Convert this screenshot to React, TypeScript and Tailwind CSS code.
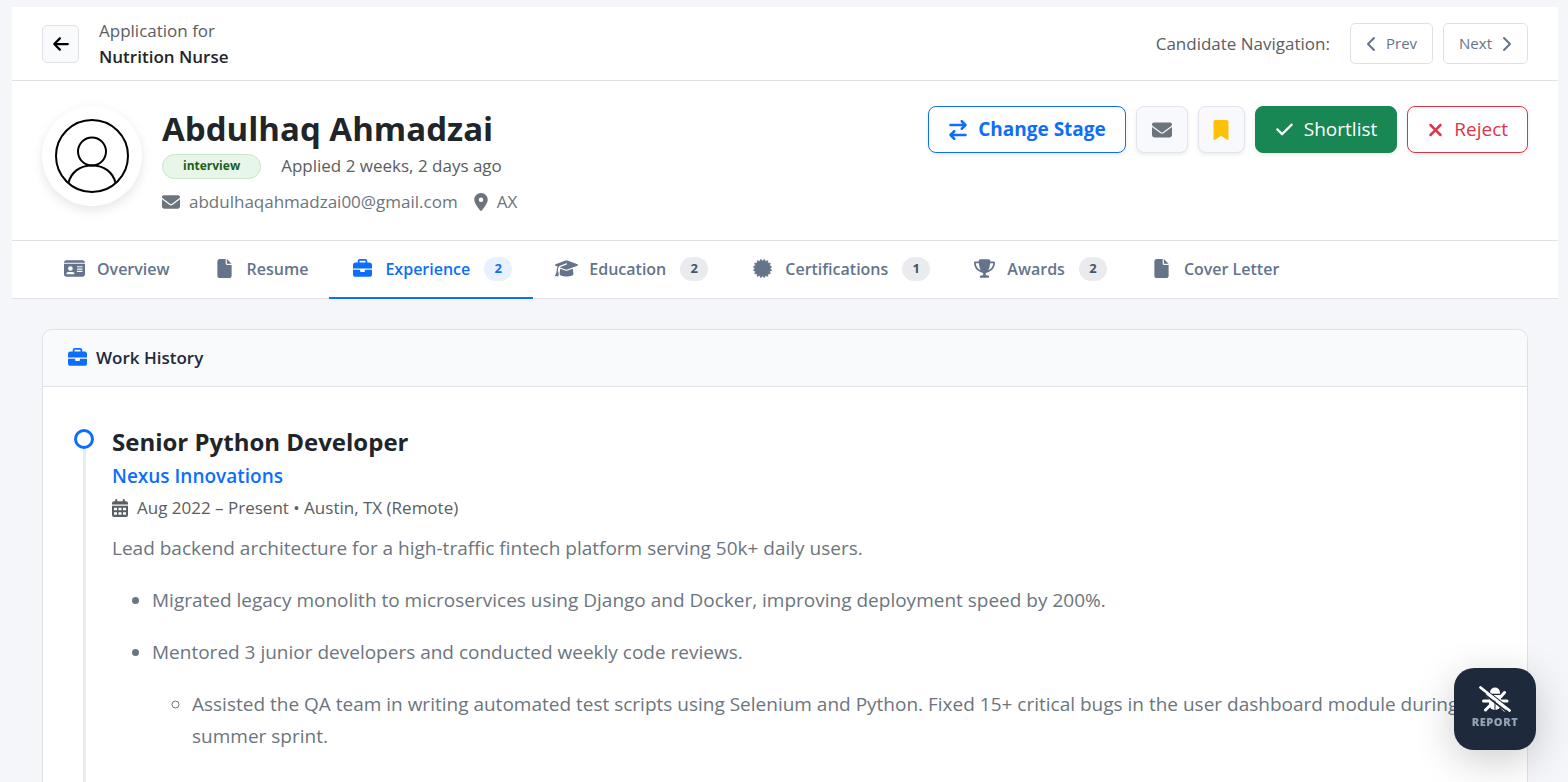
import type { ComponentType, ReactNode } from "react";
import {
  FaArrowLeft,
  FaArrowRightArrowLeft,
  FaBookmark,
  FaBriefcase,
  FaCheck,
  FaChevronLeft,
  FaChevronRight,
  FaEnvelope,
  FaFile,
  FaGraduationCap,
  FaIdCard,
  FaLocationDot,
  FaTrophy,
  FaXmark,
} from "react-icons/fa6";

type IconProps = { className?: string };

const sealPoints = Array.from({ length: 32 }, (_, i) => {
  const radius = i % 2 === 0 ? 10 : 8;
  const angle = (Math.PI * (i + 1)) / 16;
  return `${(10 + radius * Math.cos(angle)).toFixed(2)},${(10 + radius * Math.sin(angle)).toFixed(2)}`;
}).join(" ");

function SealIcon({ className }: IconProps) {
  return (
    <svg viewBox="0 0 20 20" fill="currentColor" className={className} aria-hidden="true">
      <polygon points={sealPoints} stroke="currentColor" strokeWidth="0.6" strokeLinejoin="round" />
    </svg>
  );
}

function CalendarIcon({ className }: IconProps) {
  return (
    <svg viewBox="0 0 16 18" fill="currentColor" className={className} aria-hidden="true">
      <path
        fillRule="evenodd"
        d="M3.200 1a1 1 0 0 1 2 0v1.200h5.600V1a1 1 0 0 1 2 0v1.200H14a2 2 0 0 1 2 2V5.500H0V4.200a2 2 0 0 1 2-2h1.200ZM0 6.800h16V16a2 2 0 0 1-2 2H2a2 2 0 0 1-2-2ZM2 8.700v2.600h3V8.700Zm4.500 0v2.600h3V8.700Zm4.500 0v2.600h3V8.700ZM2 13.200v2.600h3v-2.600Zm4.500 0v2.600h3v-2.600Zm4.500 0v2.600h3v-2.600Z"
      />
    </svg>
  );
}

function BugSlashIcon({ className }: IconProps) {
  return (
    <svg viewBox="0 0 32 26" fill="none" className={className} aria-hidden="true">
      <path d="M11 6.500a5 5 0 0 1 10 0v1.200H11Z" fill="#fff" />
      <path d="M10 9h12v9a6 6 0 0 1-12 0Z" fill="#fff" />
      <path
        d="M22 10.500 25.500 6.500M22 15h6M21 19.500l4.500 4.500M10 15H4.500M11 19.500 6.500 24M10 11 8 9.500"
        stroke="#fff"
        strokeWidth="3"
        strokeLinecap="round"
      />
      <path d="M16 14v10" stroke="#1e293b" strokeWidth="1" />
      <path d="M3 1.200 32 23.500M0.500 4.500 28 26" stroke="#1e293b" strokeWidth="1.600" />
      <path d="M1.500 1.500 30.500 24.500" stroke="#fff" strokeWidth="2.800" strokeLinecap="round" />
    </svg>
  );
}

type Tab = { label: string; icon: ComponentType<IconProps>; size: string; count?: number; active?: boolean };

const tabs: Tab[] = [
  { label: "Overview", icon: FaIdCard, size: "h-[19px] w-[21px]" },
  { label: "Resume", icon: FaFile, size: "h-[19px] w-[15px]" },
  { label: "Experience", icon: FaBriefcase, size: "size-[19px]", count: 2, active: true },
  { label: "Education", icon: FaGraduationCap, size: "h-[19px] w-[23px]", count: 2 },
  { label: "Certifications", icon: SealIcon, size: "size-[19px]", count: 1 },
  { label: "Awards", icon: FaTrophy, size: "h-[19px] w-[21px]", count: 2 },
  { label: "Cover Letter", icon: FaFile, size: "h-[19px] w-[15px]" },
];

function TopBar() {
  const nav =
    "flex h-[41px] items-center gap-2 rounded-[5px] border border-[#dee2e6] px-[15px] text-[15px] text-[#64748b]";
  return (
    <div className="flex items-center justify-between border-b border-[#dee2e6] px-[30px] py-[10px]">
      <div className="flex items-center gap-5">
        <button
          type="button"
          aria-label="Back"
          className="flex h-[38px] w-[37px] items-center justify-center rounded-[5px] border border-[#dee2e6] bg-[#f8fafc] text-black"
        >
          <FaArrowLeft className="size-[18px]" />
        </button>
        <div className="pt-px text-[17px] leading-[26px]">
          <p className="text-[#5a5d61]">Application for</p>
          <h2 className="font-semibold text-[#212529]">Nutrition Nurse</h2>
        </div>
      </div>
      <nav className="flex items-center gap-[10px]" aria-label="Candidate navigation">
        <span className="pr-[10px] text-[17px] text-[#5a5d61]">Candidate Navigation:</span>
        <button type="button" className={nav}>
          <FaChevronLeft className="h-4 w-3" />
          Prev
        </button>
        <button type="button" className={nav}>
          Next
          <FaChevronRight className="h-4 w-3" />
        </button>
      </nav>
    </div>
  );
}

function Avatar() {
  return (
    <div className="size-[100px] shrink-0 rounded-full bg-white p-3 shadow-[0_4px_12px_rgba(0,0,0,0.1)]">
      <svg viewBox="0 0 76 76" fill="none" stroke="#000" strokeWidth="2" aria-hidden="true">
        <circle cx="38" cy="38" r="36" />
        <circle cx="38" cy="33.500" r="14" />
        <path d="M14.500 65C17 54 26 47.500 38 47.500S59 54 61.500 65" />
      </svg>
    </div>
  );
}

function ActionButton({ className, children, label }: { className: string; children: ReactNode; label?: string }) {
  return (
    <button
      type="button"
      aria-label={label}
      className={`flex h-[47px] items-center justify-center gap-[10px] rounded-lg border text-[19px] shadow-[0_2px_4px_rgba(0,0,0,0.08)] ${className}`}
    >
      {children}
    </button>
  );
}

function Profile() {
  return (
    <div className="flex items-start justify-between border-b border-[#dee2e6] px-[30px] pt-[25px] pb-[24px]">
      <div className="flex gap-5">
        <Avatar />
        <div>
          <h1 className="text-[33px] leading-[46px] font-bold text-[#212529]">Abdulhaq Ahmadzai</h1>
          <div className="flex items-center gap-5">
            <span className="flex h-[25px] items-center rounded-full border border-[#c8e6c9] bg-[#e8f5e9] px-5 text-[12px] font-bold text-[#1b5e20]">
              interview
            </span>
            <span className="text-[17px] leading-[28px] text-[#5a5d61]">Applied 2 weeks, 2 days ago</span>
          </div>
          <div className="mt-2 flex items-center gap-4 text-[17px] leading-[28px] text-[#6c757d]">
            <span className="flex items-center gap-[9px]">
              <FaEnvelope className="size-[18px]" />
              abdulhaqahmadzai00@gmail.com
            </span>
            <span className="flex items-center gap-[9px]">
              <FaLocationDot className="h-[18px] w-[14px]" />
              AX
            </span>
          </div>
        </div>
      </div>
      <div className="flex gap-[10px]">
        <ActionButton className="border-[#0d6efd] bg-white px-[19px] font-bold text-[#0d6efd]">
          <FaArrowRightArrowLeft className="size-5" />
          Change Stage
        </ActionButton>
        <ActionButton label="Email candidate" className="w-[52px] border-[#e2e5ea] bg-[#f8f9fc] text-[#6c757d]">
          <FaEnvelope className="size-5" />
        </ActionButton>
        <ActionButton label="Bookmark candidate" className="w-[47px] border-[#e2e5ea] bg-[#f8f9fc] text-[#ffc107]">
          <FaBookmark className="h-5 w-4" />
        </ActionButton>
        <ActionButton className="border-[#198754] bg-[#198754] px-[19px] text-white">
          <FaCheck className="size-[19px]" />
          Shortlist
        </ActionButton>
        <ActionButton className="border-[#dc3545] bg-white px-[19px] text-[#dc3545]">
          <FaXmark className="h-5 w-[17px]" />
          Reject
        </ActionButton>
      </div>
    </div>
  );
}

function Tabs() {
  return (
    <div role="tablist" className="flex h-[58px] border-b border-[#dee2e6] px-[29px]">
      {tabs.map(({ label, icon: Icon, size, count, active }) => (
        <button
          key={label}
          type="button"
          role="tab"
          aria-selected={!!active}
          className={`-mb-px flex items-center border-b-2 px-[21px] text-[16px] font-semibold ${
            active ? "border-[#0d6efd] text-[#0d6efd]" : "border-transparent text-[#64748b]"
          }`}
        >
          <span className="mr-[10px] flex w-[25px] justify-center pb-[2px]">
            <Icon className={size} />
          </span>
          {label}
          {count !== undefined && (
            <span
              className={`ml-[14px] flex h-6 w-7 items-center justify-center rounded-full text-[13px] font-bold ${
                active ? "bg-[#e7f1ff] text-[#0d6efd]" : "bg-[#e9ebef] text-[#475569]"
              }`}
            >
              {count}
            </span>
          )}
        </button>
      ))}
    </div>
  );
}

function WorkHistory() {
  return (
    <section className="mx-[30px] mt-[30px] rounded-t-[10px] border border-b-0 border-[#dee2e6] bg-white">
      <header className="flex h-[57px] items-center gap-[9px] rounded-t-[10px] border-b border-[#dee2e6] bg-[#f8fafc] px-[25px]">
        <span className="pb-[2px]">
          <FaBriefcase className="size-[19px] text-[#0d6efd]" />
        </span>
        <h3 className="text-[17px] font-semibold text-[#1e293b]">Work History</h3>
      </header>
      <div className="flex gap-[18px] pt-[42px] pr-[25px] pl-[31px]">
        <div className="flex w-5 shrink-0 flex-col items-center">
          <span className="size-5 shrink-0 rounded-full border-3 border-[#0d6efd] bg-white" />
          <span className="w-[3px] grow bg-[#e9ecef]" />
        </div>
        <article className="min-w-0 grow pb-10 text-[19px] leading-8 text-[#6c757d]">
          <h4 className="text-[24px] leading-[26px] font-bold text-[#212529]">Senior Python Developer</h4>
          <a href="#nexus" className="mt-[5px] block text-[19px] leading-8 font-semibold text-[#0d6efd]">
            Nexus Innovations
          </a>
          <p className="flex items-center gap-[9px] text-[17px] text-[#5a5d61]">
            <CalendarIcon className="h-[18px] w-4" />
            Aug 2022 – Present • Austin, TX (Remote)
          </p>
          <p className="mt-2">Lead backend architecture for a high-traffic fintech platform serving 50k+ daily users.</p>
          <ul className="mt-5 flex list-disc flex-col gap-5 pl-10">
            <li>Migrated legacy monolith to microservices using Django and Docker, improving deployment speed by 200%.</li>
            <li>
              Mentored 3 junior developers and conducted weekly code reviews.
              <ul className="mt-5 list-[circle] pl-10">
                <li>
                  Assisted the QA team in writing automated test scripts using Selenium and Python. Fixed 15+ critical
                  bugs in the user dashboard module during the summer sprint.
                </li>
              </ul>
            </li>
          </ul>
        </article>
      </div>
    </section>
  );
}

export default function App() {
  return (
    <div className="h-screen overflow-hidden bg-[#f5f6fa] pt-[7px] pr-[10px] pl-3 font-['Open_Sans',sans-serif]">
      <div className="bg-white">
        <TopBar />
        <Profile />
        <Tabs />
      </div>
      <WorkHistory />
      <button
        type="button"
        className="fixed right-8 bottom-8 flex size-[82px] flex-col items-center justify-center rounded-[20px] bg-[#1e293b] text-white shadow-[0_10px_40px_rgba(0,0,0,0.2)]"
      >
        <BugSlashIcon className="h-[26px] w-8" />
        <span className="text-[11px] leading-5 font-extrabold tracking-wider text-[#94a3b8]">REPORT</span>
      </button>
    </div>
  );
}
